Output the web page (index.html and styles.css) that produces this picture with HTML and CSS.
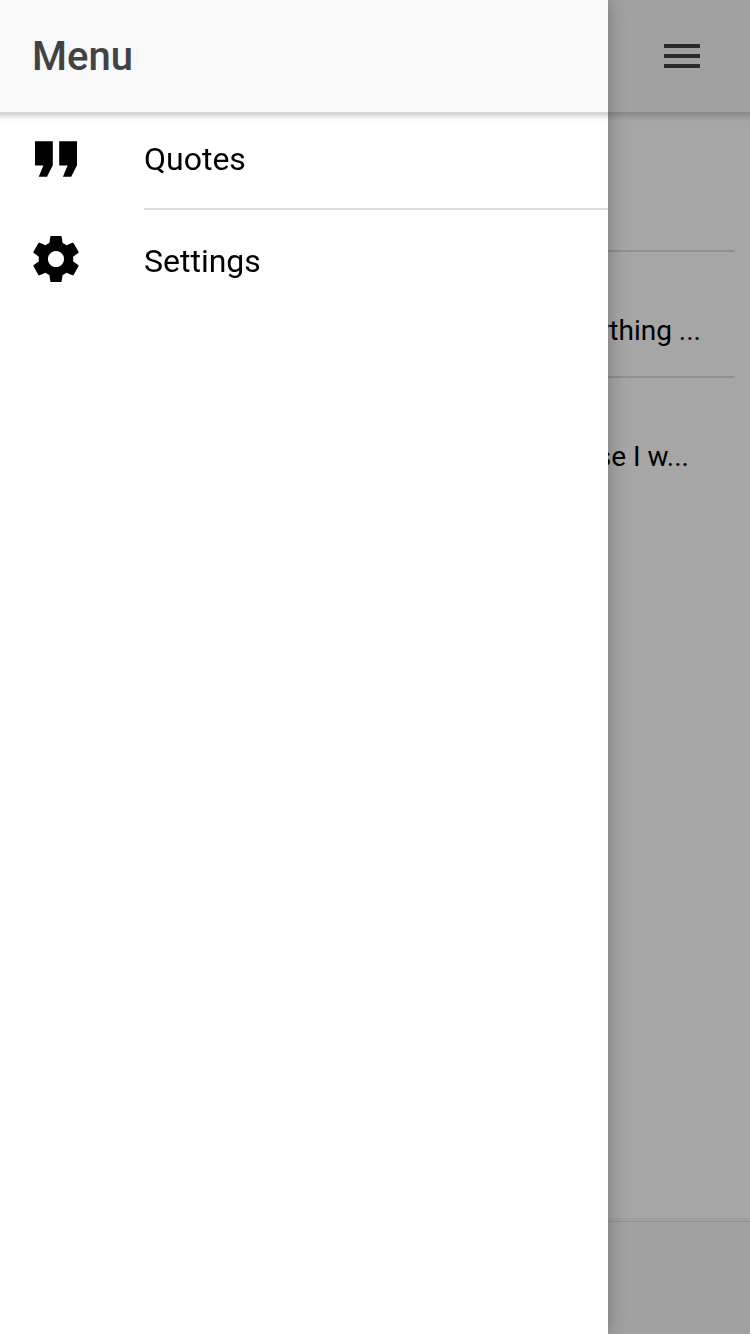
FILE: index.html
```html
<!DOCTYPE html>
<html lang="en">
<head>
<meta charset="utf-8">
<meta name="viewport" content="width=device-width, initial-scale=1">
<title>Menu</title>
<link rel="stylesheet" href="styles.css">
</head>
<body>
<main class="page">
  <header class="toolbar toolbar-end">
    <button class="menu-toggle" type="button" aria-label="Toggle menu">
      <svg width="36" height="24" viewBox="0 0 36 24" aria-hidden="true"><path fill="currentColor" d="M0 0h36v4H0zM0 10h36v4H0zM0 20h36v4H0z"/></svg>
    </button>
  </header>
  <ul class="quote-list">
    <li class="quote"></li>
    <li class="quote"><p class="excerpt">rything ...</p></li>
    <li class="quote"><p class="excerpt excerpt-short">se I w...</p></li>
  </ul>
  <footer class="footer"></footer>
</main>
<div class="backdrop"></div>
<aside class="drawer">
  <header class="toolbar"><h1 class="title">Menu</h1></header>
  <nav class="menu">
    <button class="menu-item" type="button">
      <svg class="icon" viewBox="0 0 48 48" aria-hidden="true"><path d="M3 4.2h17.8v24L15 39.8H6.7l4.7-11.2H3zM27.2 4.2H45v24l-5.8 11.6h-8.3l4.7-11.2h-8.4z"/></svg>
      <span class="label">Quotes</span>
    </button>
    <button class="menu-item" type="button">
      <svg class="icon" viewBox="1.57 1.57 20.87 20.87" aria-hidden="true"><path d="M19.43 12.98c.04-.32.07-.64.07-.98s-.03-.66-.07-.98l2.21-1.65c.19-.15.28-.32.16-.54l-2.1-3.66c-.12-.22-.35-.3-.57-.22l-2.57 1.1c-.52-.4-1.08-.73-1.69-.98l-.38-2.65C14.46 2.18 14.25 2 14 2h-4c-.25 0-.46.18-.49.42l-.38 2.65c-.61.25-1.17.59-1.69.98l-2.57-1.1c-.23-.09-.45 0-.57.22l-2.1 3.66c-.13.22-.03.39.16.54l2.21 1.65c-.04.32-.07.65-.07.98s.03.66.07.98l-2.21 1.65c-.19.15-.28.32-.16.54l2.1 3.66c.12.22.35.3.57.22l2.57-1.1c.52.4 1.08.73 1.69.98l.38 2.65c.03.24.24.42.49.42h4c.25 0 .46-.18.49-.42l.38-2.65c.61-.25 1.17-.59 1.69-.98l2.57 1.1c.23.09.45 0 .57-.22l2.1-3.66c.12-.22.03-.39-.16-.54l-2.21-1.65zM12 15.5c-1.93 0-3.5-1.57-3.5-3.5s1.57-3.5 3.5-3.5 3.5 1.57 3.5 3.5-1.57 3.5-3.5 3.5z"/></svg>
      <span class="label">Settings</span>
    </button>
  </nav>
</aside>
</body>
</html>
```
FILE: styles.css
```css
* { box-sizing: border-box; }
body {
  margin: 0;
  background: #fff;
  color: #000;
  font-family: Roboto, "Noto Sans", sans-serif;
}
button {
  margin: 0;
  border: 0;
  padding: 0;
  background: none;
  color: inherit;
  font: inherit;
  text-align: left;
  cursor: pointer;
}
.page {
  display: flex;
  flex-direction: column;
  min-height: 100vh;
}
.toolbar {
  position: relative;
  display: flex;
  align-items: center;
  min-height: 112px;
  padding: 0 32px;
  background: #f8f8f8;
  color: #424242;
}
.toolbar::after {
  content: "";
  position: absolute;
  top: 100%;
  left: 0;
  right: 0;
  height: 10px;
  background: linear-gradient(rgba(0,0,0,.16) 0, rgba(0,0,0,.17) 2px, rgba(0,0,0,.1) 4px, rgba(0,0,0,.03) 7px, transparent 10px);
}
.toolbar-end {
  justify-content: flex-end;
  padding-right: 50px;
}
.menu-toggle { display: flex; }
.title {
  margin: 0;
  padding-top: 2px;
  font-size: 40px;
  font-weight: 500;
  line-height: 48px;
}
.quote-list {
  flex: 1;
  margin: 0;
  padding: 14px 16px 0;
  list-style: none;
}
.quote {
  display: flex;
  justify-content: flex-end;
  align-items: flex-end;
  min-height: 126px;
  border-bottom: 2px solid #dedede;
  padding: 0 33px 27px 0;
}
.quote:last-child { border-bottom-color: transparent; }
.excerpt {
  margin: 0;
  font-size: 28px;
  line-height: 36px;
}
.excerpt-short { padding-right: 12px; }
.footer {
  position: relative;
  min-height: 112px;
  background: #f8f8f8;
}
.footer::before {
  content: "";
  position: absolute;
  bottom: 100%;
  left: 0;
  right: 0;
  height: 4px;
  background: linear-gradient(rgba(0,0,0,.03) 2px, rgba(0,0,0,.06) 3px, rgba(0,0,0,.12) 3px);
}
.backdrop {
  position: fixed;
  inset: 0;
  background: rgba(0,0,0,.35);
}
.drawer {
  position: fixed;
  top: 0;
  bottom: 0;
  left: 0;
  width: 608px;
  max-width: 85%;
  background: #fff;
  box-shadow: 0 0 20px rgba(0,0,0,.3);
}
.menu {
  display: flex;
  flex-direction: column;
}
.menu-item {
  display: flex;
  align-items: flex-start;
  gap: 64px;
  padding-left: 32px;
}
.icon {
  flex: none;
  width: 48px;
  height: 48px;
  margin-top: 25px;
}
.label {
  flex: 1;
  border-bottom: 2px solid #dedede;
  padding: 27px 0 29px;
  font-size: 32px;
  line-height: 40px;
}
.menu-item:last-child .label {
  border-bottom: 0;
  padding: 31px 0;
}
```
